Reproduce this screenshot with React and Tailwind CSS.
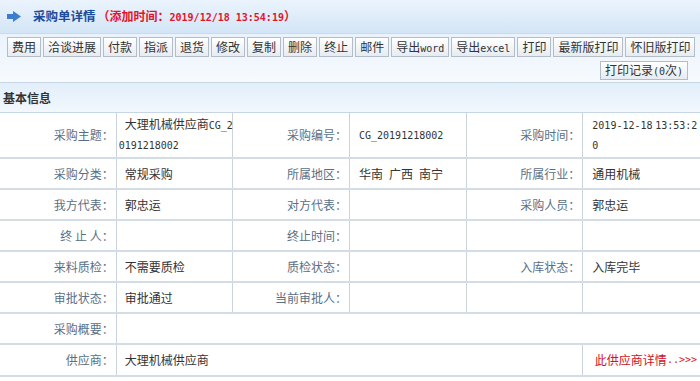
const FONT = "font-['Noto_Sans_CJK_SC',sans-serif]";

const buttons = [
  "费用",
  "洽谈进展",
  "付款",
  "指派",
  "退货",
  "修改",
  "复制",
  "删除",
  "终止",
  "邮件",
  ["导出", "word"],
  ["导出", "excel"],
  "打印",
  "最新版打印",
  "怀旧版打印",
];

const rows = [
  ["采购主题：", "\u2002大理机械供应商CG_2\n0191218002", "采购编号：", "CG_20191218002", "采购时间：", "2019-12-18 13:53:2\n0"],
  ["采购分类：", "常规采购", "所属地区：", "华南\u2002广西\u2002南宁", "所属行业：", "通用机械"],
  ["我方代表：", "郭忠运", "对方代表：", "", "采购人员：", "郭忠运"],
  ["终 止 人：", "", "终止时间：", "", "", ""],
  ["来料质检：", "不需要质检", "质检状态：", "", "入库状态：", "入库完毕"],
  ["审批状态：", "审批通过", "当前审批人：", "", "", ""],
];

function Mono({ children }) {
  return <span className="font-['DejaVu_Sans_Mono',monospace] text-[10px]">{children}</span>;
}

// ascii runs go in a mono span so they stay half-width like the original
function Txt({ text }) {
  const parts = text.split(/([\x21-\x7e]+)/);
  return parts.map((p, i) => (/^[\x21-\x7e]+$/.test(p) ? <Mono key={i}>{p}</Mono> : <span key={i}>{p}</span>));
}

const btnCls =
  "h-5 shrink-0 whitespace-nowrap border border-[#b4bcc5] bg-gradient-to-b from-white to-[#e6ecf2] px-[4px] text-xs leading-none text-[#333]";

function ToolButton({ label }) {
  return (
    <button className={btnCls}>
      {Array.isArray(label) ? (
        <>
          {label[0]}
          <Mono>{label[1]}</Mono>
        </>
      ) : (
        label
      )}
    </button>
  );
}

const cellBorder = "border-r border-[#cbd3dc]";
const labelCls = `flex items-center justify-end pr-[2px] whitespace-pre text-[#5a6f86] ${cellBorder}`;
const valueCls = `flex items-center text-[#333] whitespace-pre leading-[18px] ${cellBorder}`;

export default function App() {
  return (
    <div className={`${FONT} h-[381px] w-[700px] overflow-hidden bg-white text-xs`}>
      <header className="flex h-[34px] items-center border-b border-[#c8dbee] bg-gradient-to-b from-[#ebf4fd] to-[#d3e5f6] pl-[7px]">
        <svg width="14" height="11" viewBox="0 0 14 11" className="mr-[12px]">
          <rect x="0" y="3" width="7" height="5" fill="#3b7dcf" />
          <polygon points="6,0 14,5.5 6,11" fill="#3b7dcf" />
        </svg>
        <span className="text-[12.5px] font-bold text-[#1d4a9b]">采购单详情</span>
        <span className="ml-[2px] font-bold text-[#e2132b]">
          （添加时间：<Mono>2019/12/18 13:54:19</Mono>）
        </span>
      </header>

      <div className="border-b border-[#c6d6e6] bg-gradient-to-b from-[#eaf3fc] to-[#f7fafe] pb-[2px] pl-[7px] pt-[3px]">
        <div className="flex gap-[2px]">
          {buttons.map((b, i) => (
            <ToolButton key={i} label={b} />
          ))}
        </div>
        <div className="mt-[4px] flex justify-end pr-[12px]">
          <button className={`${btnCls} h-[19px]`}>
            打印记录<Mono>(0</Mono>次<Mono>)</Mono>
          </button>
        </div>
      </div>

      <div className="flex h-[30px] items-center border-b border-[#c6d6e6] bg-gradient-to-b from-[#e2eefa] to-[#f2f8fd] pl-[3px] font-bold text-[#333]">
        基本信息
      </div>

      <div className="grid grid-cols-6">
        {rows.map((r, ri) => (
          <div
            key={ri}
            className={`col-span-6 grid grid-cols-6 border-b-2 border-[#d4dde6] ${ri === 0 ? "h-[46px]" : "h-[31px]"}`}
          >
            {r.map((c, ci) => (
              <div
                key={ci}
                className={`${ci % 2 === 0 ? labelCls : `${valueCls} ${ri === 0 && ci === 1 ? "pl-[2px]" : ci === 1 ? "pl-[8px]" : "pl-[9px]"}`} ${ci === 5 ? "border-r-0" : ""}`}
              >
                <div>
                  <Txt text={c} />
                </div>
              </div>
            ))}
          </div>
        ))}

        <div className="col-span-6 grid h-[31px] grid-cols-6 border-b-2 border-[#d4dde6]">
          <div className={labelCls}>采购概要：</div>
          <div className="col-span-5" />
        </div>

        <div className="col-span-6 grid h-[32px] grid-cols-6 border-b-2 border-[#d4dde6]">
          <div className={labelCls}>供应商：</div>
          <div className={`${valueCls} col-span-4 pl-[8px]`}>大理机械供应商</div>
          <div className="flex items-center justify-end pr-[3px] text-[#d4101f]">
            此供应商详情<Mono>..&gt;&gt;&gt;</Mono>
          </div>
        </div>
      </div>
    </div>
  );
}
